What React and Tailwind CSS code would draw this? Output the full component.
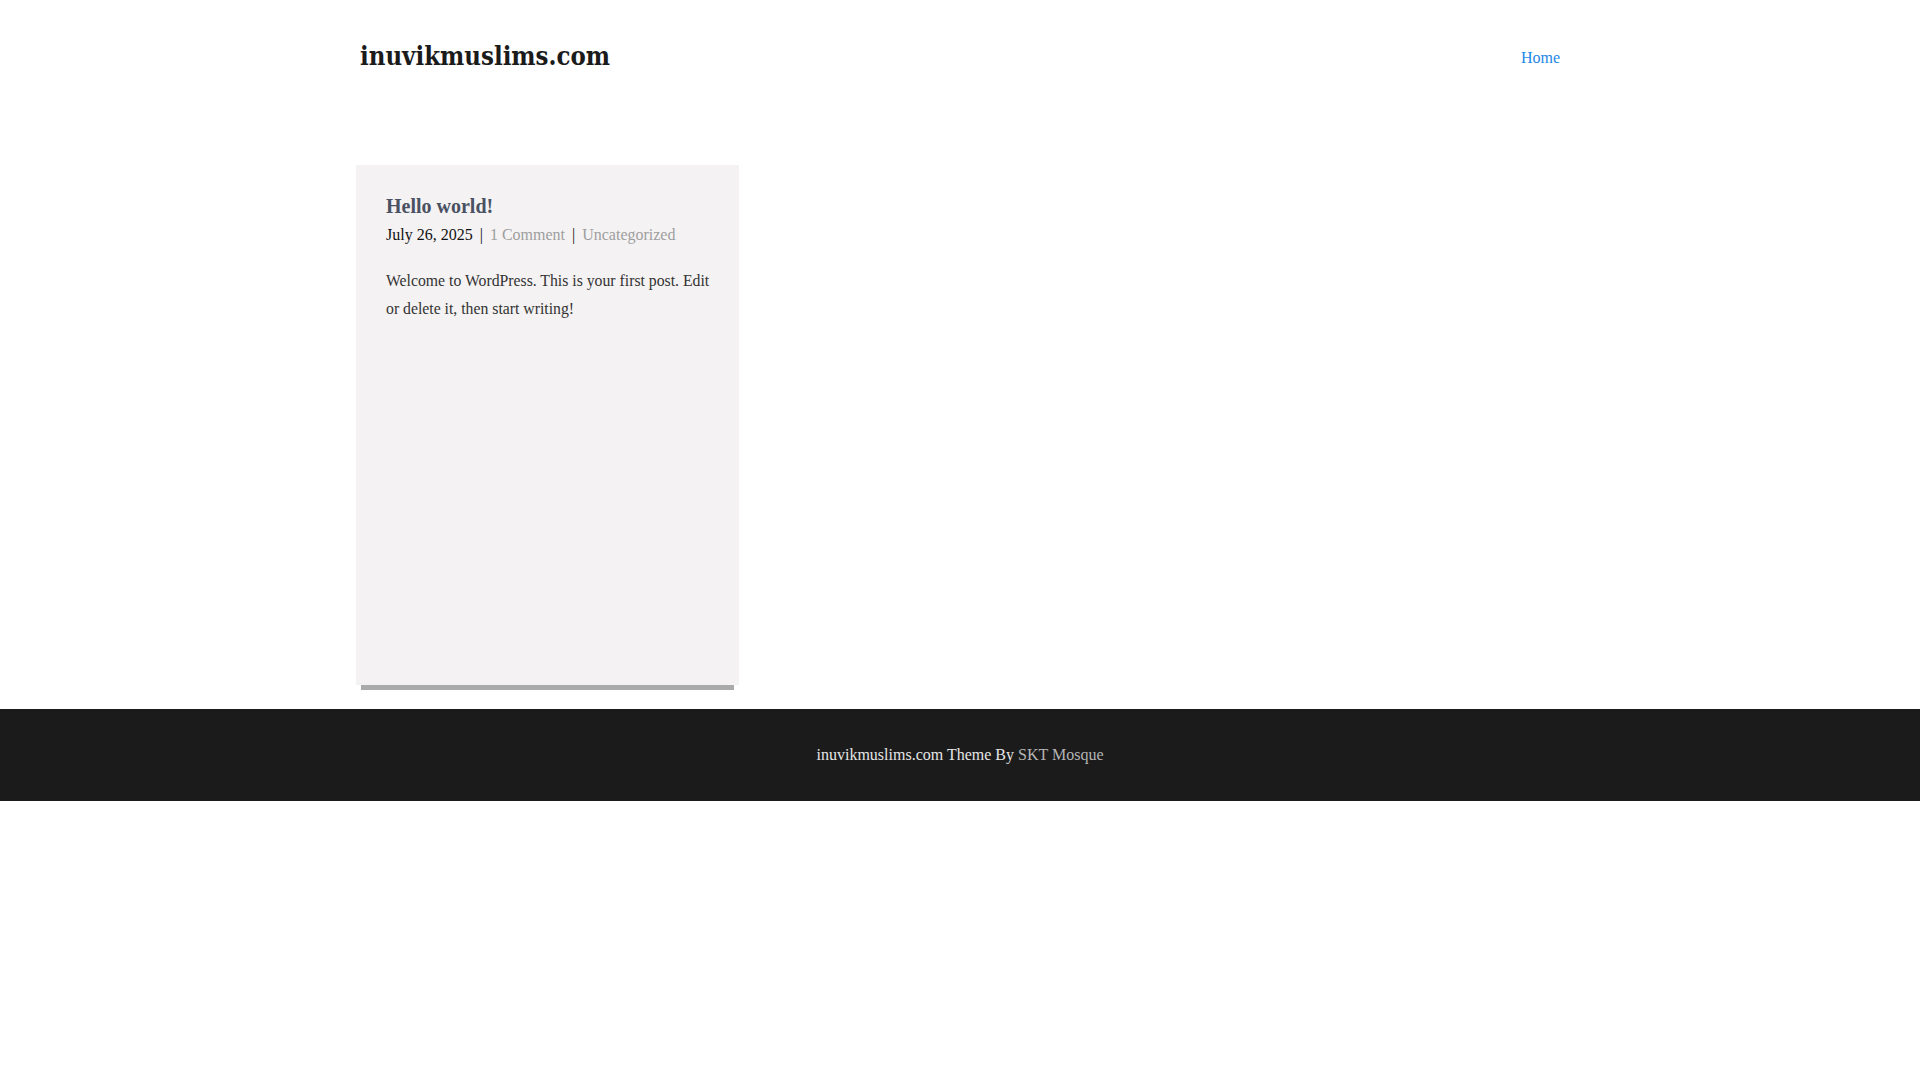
export default function App() {
  const serif = { fontFamily: '"Liberation Serif", "Times New Roman", serif' };
  return (
    <div className="min-h-[1080px] bg-white" style={serif}>
      <header className="w-[1200px] mx-auto flex justify-between pt-[38px] h-[110px] items-start">
        <div className="font-bold text-[#1b1b1b] leading-[36px]" style={{ fontFamily: '"DejaVu Serif Condensed", "DejaVu Serif", serif', fontStretch: 'semi-condensed', fontSize: '25.5px' }}>
          inuvikmuslims.com
        </div>
        <nav className="pt-[8px]">
          <a className="text-[16px] text-[#1e88e5]">Home</a>
        </nav>
      </header>
      <main className="w-[1200px] mx-auto pt-[55px]">
        <div className="-ml-[4px] w-[383px]">
          <div className="bg-[#f4f2f3] h-[520px] pl-[30px] pr-[24px] pt-[27px]">
            <h2 className="text-[20px] font-bold text-[#4a5162] leading-[28px]">Hello world!</h2>
            <div className="text-[16px] leading-[28px] mt-[1px] text-[#111]">
              <span>July 26, 2025</span>
              <span className="mx-[7px]">|</span>
              <a className="text-[#9e9e9e]">1 Comment</a>
              <span className="mx-[7px]">|</span>
              <a className="text-[#9e9e9e]">Uncategorized</a>
            </div>
            <p className="text-[15.75px] leading-[28px] text-[#333] mt-[18px]">
              Welcome to WordPress. This is your first post. Edit or delete it, then start writing!
            </p>
          </div>
          <div className="mx-[5px] h-[5px] bg-[#aaaaaa]"></div>
        </div>
      </main>
      <footer className="mt-[19px] bg-[#1b1b1b] h-[92px] flex items-center justify-center">
        <p className="text-[16px] text-[#e6e6e6]">
          inuvikmuslims.com Theme By <a className="text-[#b5b5b5]">SKT Mosque</a>
        </p>
      </footer>
    </div>
  );
}
